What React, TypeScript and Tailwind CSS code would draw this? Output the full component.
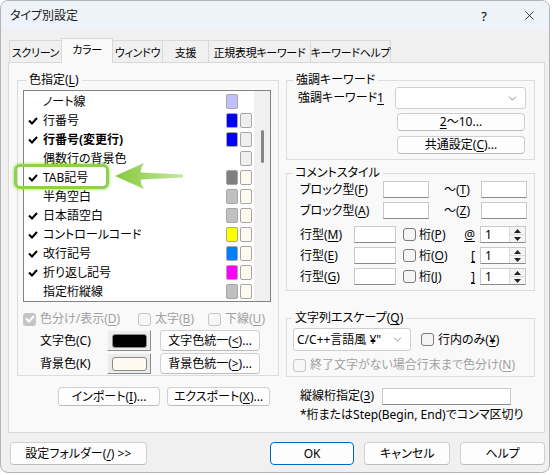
import { ChevronDown, X } from 'lucide-react';
import type { ReactNode } from 'react';

type Item = { label: string; check: boolean; bold?: boolean; c1: string | null; c2: string | null };

const items: Item[] = [
  { label: 'ノート線', check: false, c1: '#c0c0ff', c2: null },
  { label: '行番号', check: true, c1: '#0000ff', c2: '#efefef' },
  { label: '行番号(変更行)', check: true, bold: true, c1: '#0000ff', c2: '#efefef' },
  { label: '偶数行の背景色', check: false, c1: null, c2: '#efefef' },
  { label: 'TAB記号', check: true, c1: '#808080', c2: '#fffaf0' },
  { label: '半角空白', check: false, c1: '#c0c0c0', c2: '#fffaf0' },
  { label: '日本語空白', check: true, c1: '#c0c0c0', c2: '#fffaf0' },
  { label: 'コントロールコード', check: true, c1: '#ffff00', c2: '#fffaf0' },
  { label: '改行記号', check: true, c1: '#0080ff', c2: '#fffaf0' },
  { label: '折り返し記号', check: true, c1: '#ff00ff', c2: '#fffaf0' },
  { label: '指定桁縦線', check: false, c1: '#c0c0c0', c2: '#fffaf0' },
];

const tabs = [
  { label: 'スクリーン', w: 'w-[53px]' },
  { label: 'カラー', w: 'w-[52px]', active: true },
  { label: 'ウィンドウ', w: 'w-[51px]' },
  { label: '支援', w: 'w-[47px]' },
  { label: '正規表現キーワード', w: 'w-[103px]' },
  { label: 'キーワードヘルプ', w: 'w-[81px]' },
];

function U({ children }: { children: ReactNode }) {
  return <span className="underline underline-offset-[2px]">{children}</span>;
}

function Btn({ className, children }: { className: string; children: ReactNode }) {
  return (
    <div
      className={`flex items-center justify-center whitespace-nowrap rounded-[4px] border border-[#d0d0d0] border-b-[#bcbcbc] bg-[#fdfdfd] text-[12px] leading-[16px] ${className}`}
    >
      {children}
    </div>
  );
}

function Tick({ color = '#000' }: { color?: string }) {
  return (
    <svg width="10" height="8" viewBox="0 0 10 8">
      <path d="M1 3.5 L4 6.5 L9 1" fill="none" stroke={color} strokeWidth="2" />
    </svg>
  );
}

function Box({ checked, disabled }: { checked?: boolean; disabled?: boolean }) {
  if (checked && disabled) {
    return (
      <div className="flex h-[13px] w-[13px] shrink-0 items-center justify-center rounded-[3px] bg-[#c4c4c4]">
        <Tick color="#fff" />
      </div>
    );
  }
  return (
    <div
      className={`h-[13px] w-[13px] shrink-0 rounded-[3px] border ${disabled ? 'border-[#c4c4c4] bg-[#f7f7f7]' : 'border-[#7a7a7a] bg-[#f5f5f5]'}`}
    />
  );
}

function Field({ className }: { className: string }) {
  return <div className={`border border-[#c9c9c9] border-b-[#8a8a8a] bg-white ${className}`} />;
}

function Spin() {
  return (
    <div className="flex h-[17px] w-[46px] border border-[#c9c9c9] border-b-[#8a8a8a] bg-white">
      <div className="flex-1 pl-[4px] text-[12px] leading-[15px]">1</div>
      <div className="flex w-[16px] flex-col border-l border-[#dcdcdc] bg-[#f4f4f4]">
        <div className="flex flex-1 items-center justify-center border-b border-[#dcdcdc]">
          <svg width="7" height="4" viewBox="0 0 7 4">
            <path d="M0 4 L3.5 0 L7 4 Z" fill="#222" />
          </svg>
        </div>
        <div className="flex flex-1 items-center justify-center">
          <svg width="7" height="4" viewBox="0 0 7 4">
            <path d="M0 0 L3.5 4 L7 0 Z" fill="#222" />
          </svg>
        </div>
      </div>
    </div>
  );
}

function Swatch({ color }: { color: string | null }) {
  if (!color) return <div className="h-[15px] w-[12px]" />;
  return (
    <div className="h-[15px] w-[12px] rounded-[2px] border border-[#a6a6a6]" style={{ backgroundColor: color }} />
  );
}

function ColorBtn({ fill }: { fill: string }) {
  return (
    <div className="flex h-[21px] w-[44px] items-center justify-center border border-t-[#f8f8f8] border-l-[#f8f8f8] border-r-[#8c8c8c] border-b-[#8c8c8c] bg-[#ececec]">
      <div className="h-[14px] w-[35px] rounded-[3px] border border-[#8a8a8a]" style={{ backgroundColor: fill }} />
    </div>
  );
}

export default function App() {
  return (
    <div className="relative h-[475px] w-[553px] overflow-hidden bg-white font-['Noto_Sans','Noto_Sans_CJK_JP',sans-serif] text-[12px] leading-[16px] text-black [font-feature-settings:'palt']">
      <div className="flex h-[473px] w-[550px] flex-col overflow-hidden rounded-[8px] border border-[#b4b4b4] bg-[#f0f0f0]">
        {/* title bar */}
        <div className="flex h-[29px] items-center bg-[#eef3f9] pl-[9px]">
          <span className="text-[12px] text-[#1a1a1a]">タイプ別設定</span>
          <div className="ml-auto flex h-full items-center">
            <div className="flex w-[50px] justify-center text-[13px]">?</div>
            <div className="flex w-[40px] justify-center">
              <X size={15} strokeWidth={1.2} />
            </div>
          </div>
        </div>

        <div className="flex flex-col pl-[7px]">
          {/* tabs */}
          <div className="mt-[8px] flex h-[25px] items-end pl-[2px]">
            {tabs.map((t) =>
              t.active ? (
                <div
                  key={t.label}
                  className={`relative z-10 -ml-px flex h-[25px] ${t.w} items-start justify-center whitespace-nowrap border border-b-0 border-[#d9d9d9] bg-[#f9f9f9] pt-[3px] text-[11px] tracking-[-0.3px]`}
                >
                  {t.label}
                </div>
              ) : (
                <div
                  key={t.label}
                  className={`-ml-px flex h-[23px] ${t.w} items-start justify-center whitespace-nowrap border border-[#d9d9d9] bg-[#f0f0f0] pt-[4px] text-[11px] tracking-[-0.3px]`}
                >
                  {t.label}
                </div>
              ),
            )}
          </div>

          {/* tab pane */}
          <div className="-mt-px flex h-[371px] w-[537px] border border-[#d9d9d9] bg-[#f9f9f9] pl-[8px] pt-[9px]">
            {/* left column */}
            <div className="flex w-[262px] flex-col">
              <fieldset className="flex h-[304px] flex-col border border-[#dcdcdc] pl-[5px]">
                <legend className="ml-[3px] px-[3px] leading-[16px]">
                  色指定(<U>L</U>)
                </legend>
                <div className="mt-[2px] flex h-[212px] w-[248px] border border-[#828282] bg-white">
                  <div className="flex flex-1 flex-col pt-[1px]">
                    {items.map((it) => (
                      <div key={it.label} className="flex h-[19px] items-center pl-[4px] pr-[2px]">
                        <div className="flex w-[15px] items-center">{it.check ? <Tick /> : null}</div>
                        <div className={`flex-1 whitespace-nowrap ${it.bold ? 'font-bold' : ''}`}>{it.label}</div>
                        <Swatch color={it.c1} />
                        <div className="w-[2px]" />
                        <Swatch color={it.c2} />
                      </div>
                    ))}
                  </div>
                  <div className="w-[16px] bg-[#f0f0f0] pt-[39px]">
                    <div className="mx-auto h-[33px] w-[3px] rounded-full bg-[#858585]" />
                  </div>
                </div>

                <div className="mt-[10px] flex h-[14px] items-center text-[#a0a0a0]">
                  <Box checked disabled />
                  <span className="ml-[4px] w-[98px] whitespace-nowrap">
                    色分け/表示(<U>D</U>)
                  </span>
                  <Box disabled />
                  <span className="ml-[4px] w-[53px] whitespace-nowrap">
                    太字(<U>B</U>)
                  </span>
                  <Box disabled />
                  <span className="ml-[4px] whitespace-nowrap">
                    下線(<U>U</U>)
                  </span>
                </div>

                <div className="mt-[4px] flex h-[21px] items-center pl-[17px]">
                  <span className="w-[67px]">文字色(C)</span>
                  <ColorBtn fill="#000000" />
                  <Btn className="ml-[9px] h-[21px] w-[100px]">
                    文字色統一(<U>&lt;</U>)...
                  </Btn>
                </div>
                <div className="mt-[2px] flex h-[21px] items-center pl-[17px]">
                  <span className="w-[67px]">背景色(K)</span>
                  <ColorBtn fill="#fffaf0" />
                  <Btn className="ml-[9px] h-[21px] w-[100px]">
                    背景色統一(<U>&gt;</U>)...
                  </Btn>
                </div>
              </fieldset>

              <div className="mt-[11px] flex h-[19px] pl-[41px]">
                <Btn className="h-[19px] w-[102px]">
                  インポート(<U>I</U>)...
                </Btn>
                <Btn className="ml-[7px] h-[19px] w-[103px]">
                  エクスポート(<U>X</U>)...
                </Btn>
              </div>
            </div>

            {/* right column */}
            <div className="ml-[7px] flex w-[249px] flex-col">
              <fieldset className="flex h-[88px] flex-col border border-[#dcdcdc]">
                <legend className="ml-[6px] px-[3px] leading-[16px]">強調キーワード</legend>
                <div className="-mt-px flex h-[22px] items-center pl-[11px]">
                  <span className="w-[97px]">
                    強調キーワード<U>1</U>
                  </span>
                  <div className="flex h-[22px] w-[131px] items-center justify-end rounded-[3px] border border-[#cfcfcf] bg-white pr-[6px]">
                    <ChevronDown size={13} strokeWidth={1.2} color="#555" />
                  </div>
                </div>
                <Btn className="ml-[110px] mt-[4px] h-[18px] w-[128px]">
                  <U>2</U>～10...
                </Btn>
                <Btn className="ml-[110px] mt-[5px] h-[18px] w-[128px]">
                  共通設定(<U>C</U>)...
                </Btn>
              </fieldset>

              <fieldset className="mt-[5px] flex h-[126px] flex-col border border-[#dcdcdc]">
                <legend className="ml-[5px] px-[3px] leading-[16px]">コメントスタイル</legend>
                <div className="flex h-[17px] items-center pl-[13px]">
                  <span className="w-[83px]">
                    ブロック型(<U>F</U>)
                  </span>
                  <Field className="h-[17px] w-[46px]" />
                  <span className="ml-[15px] w-[37px]">
                    ～(<U>T</U>)
                  </span>
                  <Field className="h-[17px] w-[46px]" />
                </div>
                <div className="mt-[4px] flex h-[17px] items-center pl-[13px]">
                  <span className="w-[83px]">
                    ブロック型(<U>A</U>)
                  </span>
                  <Field className="h-[17px] w-[46px]" />
                  <span className="ml-[15px] w-[37px]">
                    ～(<U>Z</U>)
                  </span>
                  <Field className="h-[17px] w-[46px]" />
                </div>
                {[
                  { k: 'M', c: 'P', s: '@', mt: 'mt-[7px]' },
                  { k: 'E', c: 'O', s: '[', mt: 'mt-[4px]' },
                  { k: 'G', c: 'J', s: ']', mt: 'mt-[4px]' },
                ].map((r) => (
                  <div key={r.k} className={`${r.mt} flex h-[17px] items-center pl-[13px]`}>
                    <span className="w-[54px]">
                      行型(<U>{r.k}</U>)
                    </span>
                    <Field className="h-[17px] w-[42px]" />
                    <div className="ml-[7px] flex w-[61px] items-center">
                      <Box />
                      <span className="ml-[3px]">
                        桁(<U>{r.c}</U>)
                      </span>
                    </div>
                    <span className="w-[16px] pr-[5px] text-right">
                      <U>{r.s}</U>
                    </span>
                    <Spin />
                  </div>
                ))}
              </fieldset>

              <fieldset className="mt-[19px] flex h-[67px] flex-col border border-[#dcdcdc]">
                <legend className="ml-[5px] px-[3px] leading-[16px]">
                  文字列エスケープ(<U>Q</U>)
                </legend>
                <div className="mt-[2px] flex h-[23px] items-center pl-[6px]">
                  <div className="flex h-[23px] w-[118px] items-center rounded-[3px] border border-[#cfcfcf] bg-white pl-[3px] pr-[6px]">
                    <span className="flex-1 whitespace-nowrap">C/C++言語風 ¥"</span>
                    <ChevronDown size={13} strokeWidth={1.2} color="#555" />
                  </div>
                  <div className="ml-[10px] flex items-center">
                    <Box />
                    <span className="ml-[4px]">
                      行内のみ(<U>¥</U>)
                    </span>
                  </div>
                </div>
                <div className="mt-[7px] flex h-[14px] items-center pl-[6px] text-[#a0a0a0]">
                  <Box disabled />
                  <span className="ml-[4px] whitespace-nowrap">
                    終了文字がない場合行末まで色分け(<U>N</U>)
                  </span>
                </div>
              </fieldset>

              <div className="mt-[11px] flex h-[16px] items-center pl-[14px]">
                <span className="w-[82px]">
                  縦線桁指定(<U>3</U>)
                </span>
                <Field className="h-[17px] w-[129px]" />
              </div>
              <div className="mt-[3px] whitespace-nowrap pl-[14px] leading-[16px]">
                *桁またはStep(Begin, End)でコンマ区切り
              </div>
            </div>
          </div>

          {/* footer */}
          <div className="mt-[9px] flex h-[23px] w-[537px]">
            <Btn className="ml-[2px] h-[23px] w-[137px]">
              設定フォルダー(<U>/</U>) &gt;&gt;
            </Btn>
            <Btn className="ml-[123px] h-[23px] w-[85px] !border-[#0067c0]">OK</Btn>
            <Btn className="ml-[10px] h-[23px] w-[86px]">キャンセル</Btn>
            <Btn className="ml-[10px] h-[23px] w-[85px]">ヘルプ</Btn>
          </div>
        </div>
      </div>

      {/* annotation overlay */}
      <div className="absolute left-[14px] top-[164px] h-[25px] w-[95px] rounded-[6px] border-[3px] border-[#8dd14b] shadow-[0_0_3px_1px_rgba(141,209,75,0.55)]" />
      <svg className="absolute left-[113px] top-[160px]" width="72" height="32" viewBox="0 0 72 32">
        <defs>
          <linearGradient id="ag" x1="0" y1="0" x2="1" y2="0">
            <stop offset="0" stopColor="#84cb38" />
            <stop offset="1" stopColor="#c6e6a3" />
          </linearGradient>
        </defs>
        <path d="M2 16 L31 3 Q27 9 28 12.5 L70 14.5 L70 17.5 L28 19.5 Q27 23 31 29 Z" fill="url(#ag)" />
      </svg>
    </div>
  );
}
